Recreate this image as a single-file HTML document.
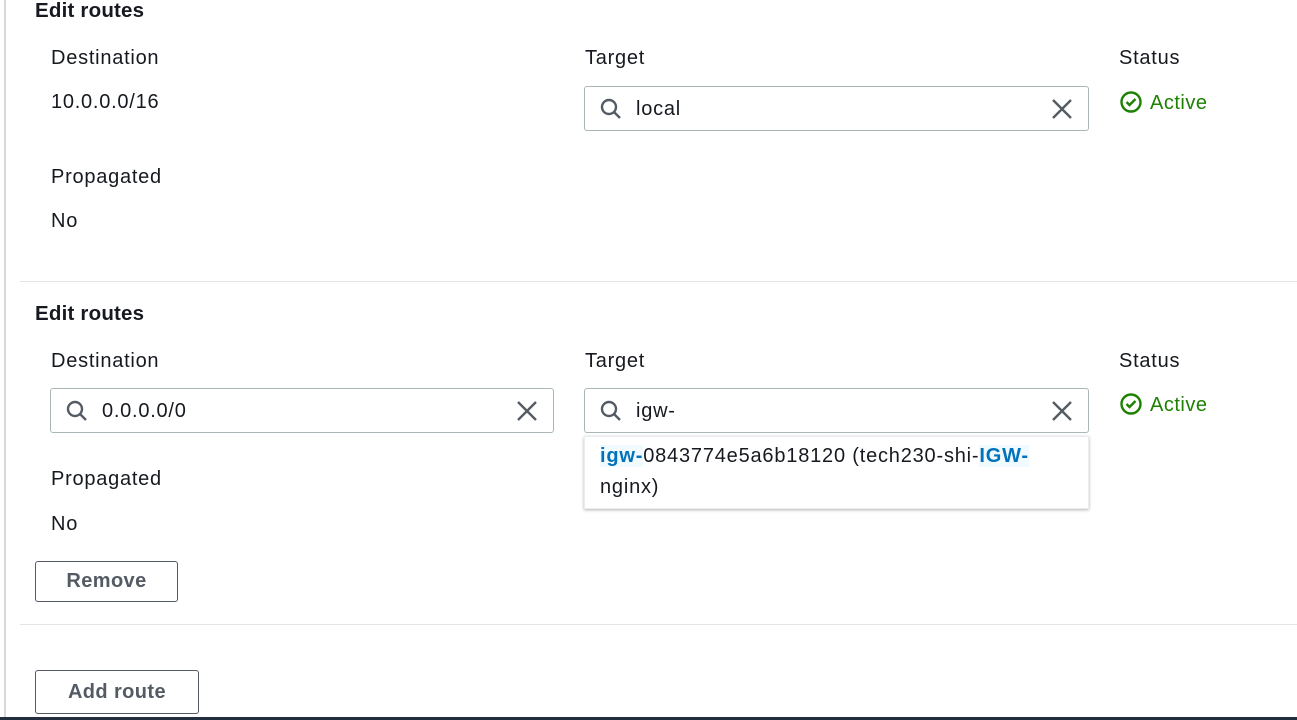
<!DOCTYPE html>
<html><head><style>
body{margin:0;width:1297px;height:720px;background:#fff;position:relative;overflow:hidden;font-family:"Liberation Sans",sans-serif;color:#16191f;}
.t{position:absolute;font-size:20px;line-height:24px;white-space:nowrap;letter-spacing:0.75px}
.b{font-weight:bold;font-size:20.5px;letter-spacing:0.2px}
.in{position:absolute;border:1px solid #aab7b8;border-radius:3px;box-sizing:border-box;background:#fff}
.in .v{position:absolute;left:51px;top:10px;font-size:20px;line-height:24px;letter-spacing:0.75px}
.in svg{position:absolute}
.hr{position:absolute;left:20px;right:0;height:1px;background:#e3e5e7}
.btn{position:absolute;border:1px solid #545b64;border-radius:3px;box-sizing:border-box;font-weight:bold;font-size:20px;letter-spacing:0.4px;color:#545b64;text-align:center;line-height:39px}
.st{position:absolute;color:#1d8102;font-size:20px;line-height:24px;letter-spacing:0.5px}
.st svg{position:absolute;left:0;top:1px}
.st span{position:absolute;left:30px;top:1px}
.hl{color:#0073bb;font-weight:bold;background:#f1faff}
</style></head><body>
<div style="position:absolute;left:4px;top:0;width:2px;height:720px;background:#d5dbdb"></div>
<div style="position:absolute;left:0;top:717px;width:1297px;height:3px;background:#232f3e"></div>

<div class="t b" style="left:35px;top:-1px">Edit routes</div>
<div class="t" style="left:51px;top:46px">Destination</div>
<div class="t" style="left:51px;top:90px">10.0.0.0/16</div>
<div class="t" style="left:585px;top:46px">Target</div>
<div class="t" style="left:1119px;top:46px">Status</div>
<div class="in" style="left:584px;top:86px;width:505px;height:45px">
<svg style="left:14px;top:10px" width="24" height="24" viewBox="0 0 24 24" fill="none" stroke="#545b64" stroke-width="2.4"><circle cx="10" cy="10" r="7"/><path d="M15 15l6 6"/></svg>
<div class="v">local</div>
<svg style="left:466px;top:11px" width="22" height="22" viewBox="0 0 22 22" stroke="#545b64" stroke-width="2.4"><path d="M2 2l18 18M20 2L2 20"/></svg>
</div>
<div class="st" style="left:1120px;top:90px"><svg width="22" height="22" viewBox="0 0 22 22" fill="none" stroke="#1d8102" stroke-width="2.4"><circle cx="11" cy="11" r="9.5"/><path d="M6.5 11l3 3 6-6"/></svg><span>Active</span></div>
<div class="t" style="left:51px;top:165px">Propagated</div>
<div class="t" style="left:51px;top:209px">No</div>
<div class="hr" style="top:281px"></div>

<div class="t b" style="left:35px;top:302px">Edit routes</div>
<div class="t" style="left:51px;top:349px">Destination</div>
<div class="t" style="left:585px;top:349px">Target</div>
<div class="t" style="left:1119px;top:349px">Status</div>
<div class="in" style="left:50px;top:388px;width:504px;height:45px">
<svg style="left:14px;top:10px" width="24" height="24" viewBox="0 0 24 24" fill="none" stroke="#545b64" stroke-width="2.4"><circle cx="10" cy="10" r="7"/><path d="M15 15l6 6"/></svg>
<div class="v">0.0.0.0/0</div>
<svg style="left:465px;top:11px" width="22" height="22" viewBox="0 0 22 22" stroke="#545b64" stroke-width="2.4"><path d="M2 2l18 18M20 2L2 20"/></svg>
</div>
<div class="in" style="left:584px;top:388px;width:505px;height:45px">
<svg style="left:14px;top:10px" width="24" height="24" viewBox="0 0 24 24" fill="none" stroke="#545b64" stroke-width="2.4"><circle cx="10" cy="10" r="7"/><path d="M15 15l6 6"/></svg>
<div class="v">igw-</div>
<svg style="left:466px;top:11px" width="22" height="22" viewBox="0 0 22 22" stroke="#545b64" stroke-width="2.4"><path d="M2 2l18 18M20 2L2 20"/></svg>
</div>
<div class="st" style="left:1120px;top:392px"><svg width="22" height="22" viewBox="0 0 22 22" fill="none" stroke="#1d8102" stroke-width="2.4"><circle cx="11" cy="11" r="9.5"/><path d="M6.5 11l3 3 6-6"/></svg><span>Active</span></div>
<div style="position:absolute;left:584px;top:436px;width:505px;height:73px;box-sizing:border-box;border:1px solid #eaeded;box-shadow:0 1px 3px rgba(0,0,0,0.3);background:#fff">
<div style="position:absolute;left:15px;top:4px;font-size:20px;line-height:31px;width:480px;letter-spacing:0.8px"><span class="hl">igw-</span>0843774e5a6b18120 (tech230-shi-<span class="hl">IGW-</span><br>nginx)</div>
</div>
<div class="t" style="left:51px;top:467px">Propagated</div>
<div class="t" style="left:51px;top:512px">No</div>
<div class="btn" style="left:35px;top:561px;width:143px;height:41px">Remove</div>
<div class="hr" style="top:624px"></div>
<div class="btn" style="left:35px;top:670px;width:164px;height:44px;line-height:43px">Add route</div>
</body></html>
